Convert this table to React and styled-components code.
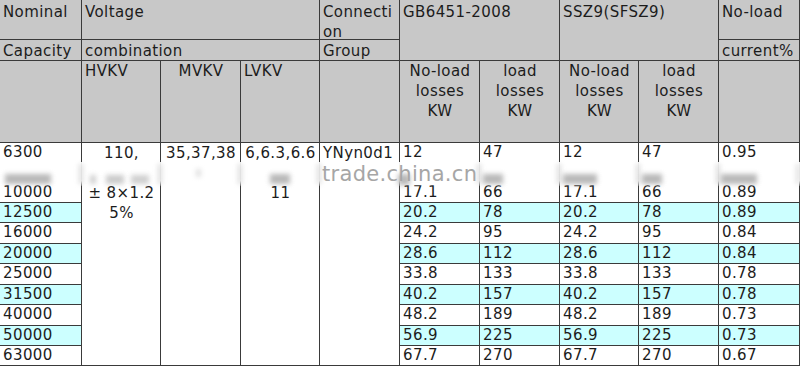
import React from "react";
import styled, { createGlobalStyle } from "styled-components";

const GlobalStyle = createGlobalStyle`
  html, body {
    margin: 0;
    padding: 0;
    background: #ffffff;
  }
  body {
    font-family: "DejaVu Sans", Verdana, sans-serif;
    color: #1c1c1c;
  }
`;

const LINE = "#3a3a3a";

const Sheet = styled.div`
  position: relative;
  display: grid;
  width: 800px;
  height: 366px;
  overflow: hidden;
  grid-template-columns: 82px 79px 80px 79px 80px 80px 80px 79px 80px 81px;
  grid-template-rows: 40px 21px 82px 20px 20px 20px 20px 21px 20px 21px 20px 21px 20px 20px;
  font-family: "DejaVu Sans", Verdana, sans-serif;
  font-size: 15px;
  letter-spacing: 0.4px;
  color: #1c1c1c;
`;

const Cell = styled.div`
  box-sizing: border-box;
  grid-column: ${(p) => p.$col} / span ${(p) => p.$cs || 1};
  grid-row: ${(p) => p.$row} / span ${(p) => p.$rs || 1};
  border-right: 1px solid ${LINE};
  border-bottom: ${(p) => (p.$noBottom ? "none" : `1px solid ${LINE}`)};
  padding: ${(p) => p.$pt || 0}px 2px 0 3px;
  text-align: ${(p) => p.$align || "left"};
  white-space: nowrap;
  overflow: hidden;
`;

const HeadCell = styled(Cell)`
  background: #c8c8c8;
  line-height: 20px;
`;

const DataCell = styled(Cell)`
  background: ${(p) => (p.$tint ? "#ccffff" : "#ffffff")};
  line-height: 18px;
`;

const MergedCell = styled(Cell)`
  background: #ffffff;
  line-height: 20px;
`;

const Band = styled.div`
  position: absolute;
  left: 0;
  top: 162px;
  width: 800px;
  height: 24px;
  background: linear-gradient(
    to bottom,
    rgba(255, 255, 255, 0.93) 0%,
    rgba(255, 255, 255, 0.93) 78%,
    rgba(255, 255, 255, 0.2) 100%
  );
  pointer-events: none;
`;

const Smudge = styled.div`
  position: absolute;
  left: ${(p) => p.$x}px;
  top: ${(p) => p.$y}px;
  width: ${(p) => p.$w}px;
  height: ${(p) => p.$h}px;
  background: ${(p) => p.$c || "#9a9a9a"};
  filter: blur(2.5px);
  opacity: ${(p) => p.$o || 0.6};
`;

const Watermark = styled.div`
  position: absolute;
  left: 322px;
  top: 166px;
  font-family: "DejaVu Sans", Verdana, sans-serif;
  font-size: 21px;
  line-height: 16px;
  letter-spacing: 0.3px;
  color: #a6a6a6;
  white-space: nowrap;
  pointer-events: none;
`;

const rows = [
  ["6300", "12", "47", "12", "47", "0.95", false],
  null,
  ["10000", "17.1", "66", "17.1", "66", "0.89", false],
  ["12500", "20.2", "78", "20.2", "78", "0.89", true],
  ["16000", "24.2", "95", "24.2", "95", "0.84", false],
  ["20000", "28.6", "112", "28.6", "112", "0.84", true],
  ["25000", "33.8", "133", "33.8", "133", "0.78", false],
  ["31500", "40.2", "157", "40.2", "157", "0.78", true],
  ["40000", "48.2", "189", "48.2", "189", "0.73", false],
  ["50000", "56.9", "225", "56.9", "225", "0.73", true],
  ["63000", "67.7", "270", "67.7", "270", "0.67", false],
];

const smudges = [
  { x: 5, y: 174, w: 46, h: 10, c: "#8a8a8a" },
  { x: 79, y: 164, w: 4, h: 20, c: "#b8b8b8", o: 0.5 },
  { x: 90, y: 175, w: 6, h: 9, c: "#b0b0b0" },
  { x: 106, y: 175, w: 18, h: 9, c: "#a8a8a8" },
  { x: 131, y: 175, w: 18, h: 9, c: "#b0b0b0" },
  { x: 158, y: 164, w: 4, h: 20, c: "#b8b8b8", o: 0.5 },
  { x: 196, y: 169, w: 5, h: 8, c: "#c0c0c0", o: 0.5 },
  { x: 238, y: 164, w: 4, h: 20, c: "#b8b8b8", o: 0.5 },
  { x: 270, y: 174, w: 20, h: 10, c: "#8a8a8a" },
  { x: 317, y: 164, w: 4, h: 20, c: "#b8b8b8", o: 0.5 },
  { x: 398, y: 174, w: 12, h: 11, c: "#8a8a8a" },
  { x: 477, y: 164, w: 4, h: 20, c: "#b8b8b8", o: 0.5 },
  { x: 483, y: 174, w: 20, h: 10, c: "#8a8a8a" },
  { x: 557, y: 164, w: 4, h: 20, c: "#b8b8b8", o: 0.5 },
  { x: 563, y: 174, w: 34, h: 10, c: "#8a8a8a" },
  { x: 636, y: 164, w: 4, h: 20, c: "#b8b8b8", o: 0.5 },
  { x: 642, y: 174, w: 20, h: 10, c: "#8a8a8a" },
  { x: 716, y: 164, w: 4, h: 20, c: "#b8b8b8", o: 0.5 },
  { x: 721, y: 174, w: 36, h: 10, c: "#8a8a8a" },
  { x: 796, y: 164, w: 4, h: 20, c: "#c0c0c0", o: 0.5 },
];

export default function App() {
  return (
    <>
      <GlobalStyle />
      <Sheet>
        <HeadCell $col={1} $row={1} $pt={2}>Nominal</HeadCell>
        <HeadCell $col={1} $row={2} $pt={1}>Capacity</HeadCell>
        <HeadCell $col={1} $row={3} />

        <HeadCell $col={2} $row={1} $cs={3} $pt={2}>Voltage</HeadCell>
        <HeadCell $col={2} $row={2} $cs={3} $pt={1}>combination</HeadCell>
        <HeadCell $col={2} $row={3}>HVKV</HeadCell>
        <HeadCell $col={3} $row={3} $align="center">MVKV</HeadCell>
        <HeadCell $col={4} $row={3}>LVKV</HeadCell>

        <HeadCell $col={5} $row={1} $pt={2}>
          Connecti
          <br />
          on
        </HeadCell>
        <HeadCell $col={5} $row={2} $pt={1}>Group</HeadCell>
        <HeadCell $col={5} $row={3} />

        <HeadCell $col={6} $row={1} $cs={2} $rs={2} $pt={2}>GB6451-2008</HeadCell>
        <HeadCell $col={6} $row={3} $align="center">
          No-load
          <br />
          losses
          <br />
          KW
        </HeadCell>
        <HeadCell $col={7} $row={3} $align="center">
          load
          <br />
          losses
          <br />
          KW
        </HeadCell>

        <HeadCell $col={8} $row={1} $cs={2} $rs={2} $pt={2}>SSZ9(SFSZ9)</HeadCell>
        <HeadCell $col={8} $row={3} $align="center">
          No-load
          <br />
          losses
          <br />
          KW
        </HeadCell>
        <HeadCell $col={9} $row={3} $align="center">
          load
          <br />
          losses
          <br />
          KW
        </HeadCell>

        <HeadCell $col={10} $row={1} $pt={2}>No-load</HeadCell>
        <HeadCell $col={10} $row={2} $pt={1}>current%</HeadCell>
        <HeadCell $col={10} $row={3} />

        <MergedCell $col={2} $row={4} $rs={11} $align="center">
          110,
          <br />
          &nbsp;
          <br />
          ± 8×1.2
          <br />
          5%
        </MergedCell>
        <MergedCell $col={3} $row={4} $rs={11} $align="center">35,37,38</MergedCell>
        <MergedCell $col={4} $row={4} $rs={11} $align="center">
          6,6.3,6.6
          <br />
          &nbsp;
          <br />
          11
        </MergedCell>
        <MergedCell $col={5} $row={4} $rs={11}>YNyn0d1</MergedCell>

        {rows.map((r, i) => {
          const row = 4 + i;
          if (!r) {
            return (
              <React.Fragment key={row}>
                <DataCell $col={1} $row={row} $noBottom />
                {[6, 7, 8, 9, 10].map((c) => (
                  <DataCell key={c} $col={c} $row={row} $noBottom />
                ))}
              </React.Fragment>
            );
          }
          const [cap, a, b, c2, d, e, tint] = r;
          const noBottom = i === 0;
          return (
            <React.Fragment key={row}>
              <DataCell $col={1} $row={row} $tint={tint} $noBottom={noBottom}>{cap}</DataCell>
              <DataCell $col={6} $row={row} $tint={tint} $noBottom={noBottom}>{a}</DataCell>
              <DataCell $col={7} $row={row} $tint={tint} $noBottom={noBottom}>{b}</DataCell>
              <DataCell $col={8} $row={row} $tint={tint} $noBottom={noBottom}>{c2}</DataCell>
              <DataCell $col={9} $row={row} $tint={tint} $noBottom={noBottom}>{d}</DataCell>
              <DataCell $col={10} $row={row} $tint={tint} $noBottom={noBottom}>{e}</DataCell>
            </React.Fragment>
          );
        })}

        <Band />
        {smudges.map((s, i) => (
          <Smudge key={i} $x={s.x} $y={s.y} $w={s.w} $h={s.h} $c={s.c} $o={s.o} />
        ))}
        <Watermark>trade.china.cn</Watermark>
      </Sheet>
    </>
  );
}
